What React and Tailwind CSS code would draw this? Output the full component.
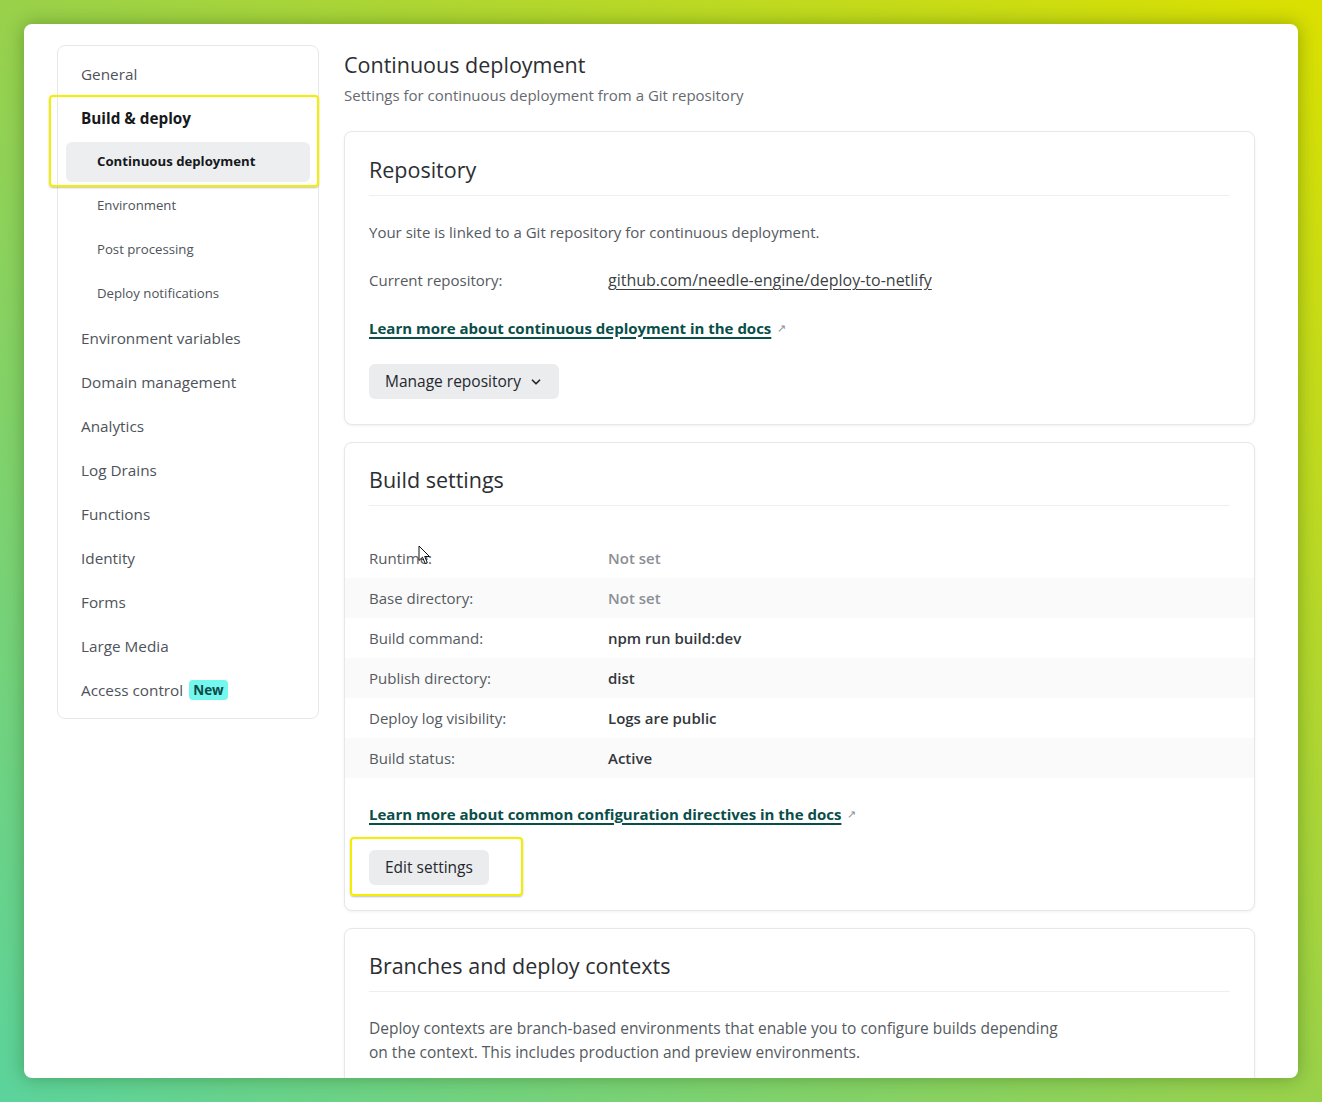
import React from "react";
import { ChevronDown } from "lucide-react";

const font = { fontFamily: '"Open Sans", "Noto Sans", sans-serif' };

function SideItem({ children, sub, active, bold }) {
  if (sub) {
    return (
      <div className="h-[44px] px-[8px] py-[2px]">
        <div
          className={
            "h-full rounded-md flex items-center pl-[31px] text-[13.2px] " +
            (active ? "bg-[#eceef0] font-bold text-[#16191c]" : "text-[#4e535a]")
          }
        >
          {children}
        </div>
      </div>
    );
  }
  return (
    <div
      className={
        "h-[44px] flex items-center pl-[23px] text-[15.3px] " +
        (bold ? "font-bold text-[#16191c]" : "text-[#4e535a]")
      }
    >
      {children}
    </div>
  );
}

function Card({ title, children, className = "", pt = "pt-[23px]" }) {
  return (
    <div
      className={
        "rounded-lg border border-[#e6e7e9] bg-white shadow-[0_1px_3px_rgba(0,0,0,0.06)] " + className
      }
    >
      <div className={"px-[24px] " + pt}>
        <div className="pb-[10px] border-b border-[#eeeff1] text-[21.5px] leading-[30px] text-[#2b2e33]">
          {title}
        </div>
      </div>
      {children}
    </div>
  );
}

function DocLink({ children }) {
  return (
    <div className="h-[24px] flex items-center text-[15px]">
      <span className="font-bold text-[#0a4e49] underline underline-offset-[3px] decoration-[1.5px]">
        {children}
      </span>
      <span className="ml-[6px] text-[11px] text-[#8a8f96]">↗</span>
    </div>
  );
}

function Row({ label, value, gray, muted }) {
  return (
    <div className={"h-[40px] flex items-center px-[24px] text-[15px] " + (gray ? "bg-[#fafafa]" : "")}>
      <div className="w-[239px] text-[#555a61]">{label}</div>
      <div className={"font-semibold " + (muted ? "text-[#8b8f95]" : "text-[#33373c]")}>{value}</div>
    </div>
  );
}

export default function App() {
  return (
    <div
      className="w-[1322px] h-[1102px] pt-[24px] pl-[24px] bg-[linear-gradient(40deg,#5bd39c_0%,#99d14a_50%,#dbe000_100%)]"
      style={font}
    >
      <div className="relative w-[1274px] h-[1054px] rounded-lg bg-white overflow-hidden shadow-[0_0_18px_rgba(20,60,0,0.35)] flex pl-[33px] pt-[21px]">
        {/* Sidebar */}
        <div className="relative self-start w-[262px] rounded-lg border border-[#e6e7e9] pt-[6px] pb-[6px]">
          <SideItem>General</SideItem>
          <SideItem bold>Build &amp; deploy</SideItem>
          <SideItem sub active>Continuous deployment</SideItem>
          <SideItem sub>Environment</SideItem>
          <SideItem sub>Post processing</SideItem>
          <SideItem sub>Deploy notifications</SideItem>
          <SideItem>Environment variables</SideItem>
          <SideItem>Domain management</SideItem>
          <SideItem>Analytics</SideItem>
          <SideItem>Log Drains</SideItem>
          <SideItem>Functions</SideItem>
          <SideItem>Identity</SideItem>
          <SideItem>Forms</SideItem>
          <SideItem>Large Media</SideItem>
          <div className="h-[44px] flex items-center pl-[23px] text-[15.3px] text-[#4e535a]">
            Access control
            <span className="ml-[6px] rounded-[4px] bg-[#74f7ef] px-[4px] text-[13.5px] leading-[20px] font-bold text-[#0b4b47]">
              New
            </span>
          </div>
          <div className="absolute left-[-9px] top-[49px] w-[270px] h-[92px] rounded-[4px] border-2 border-[#f4ee00] shadow-[0_1px_2px_rgba(0,0,0,0.25)]" />
        </div>

        {/* Main */}
        <div className="ml-[25px] w-[911px] flex flex-col">
          <div className="mt-[5px] text-[21.5px] leading-[30px] text-[#2b2e33]">Continuous deployment</div>
          <div className="text-[15px] leading-[30px] text-[#666a70]">
            Settings for continuous deployment from a Git repository
          </div>

          <Card title="Repository" className="mt-[21px]">
            <div className="px-[24px] pt-[24px] pb-[25px] flex flex-col gap-[24px] text-[15px] text-[#555a61]">
              <div className="h-[24px] flex items-center">
                Your site is linked to a Git repository for continuous deployment.
              </div>
              <div className="h-[24px] flex items-center">
                <div className="w-[239px]">Current repository:</div>
                <span className="text-[16px] text-[#3b3f44] underline underline-offset-[3px]">
                  github.com/needle-engine/deploy-to-netlify
                </span>
              </div>
              <DocLink>Learn more about continuous deployment in the docs</DocLink>
              <div>
                <button className="h-[35px] rounded-md bg-[#ebecee] px-[16px] flex items-center text-[15.5px] text-[#24282d]">
                  Manage repository
                  <ChevronDown size={14} strokeWidth={3} className="ml-[8px]" />
                </button>
              </div>
            </div>
          </Card>

          <Card title="Build settings" className="mt-[17px]" pt="pt-[22px]">
            <div className="pt-[32px] relative">
              <Row label="Runtime:" value="Not set" muted />
              <Row label="Base directory:" value="Not set" muted gray />
              <Row label="Build command:" value="npm run build:dev" />
              <Row label="Publish directory:" value="dist" gray />
              <Row label="Deploy log visibility:" value="Logs are public" />
              <Row label="Build status:" value="Active" gray />
              <svg
                className="absolute left-[73px] top-[39px]"
                width="13"
                height="20"
                viewBox="0 0 13 20"
              >
                <path
                  d="M1 1 L1 15.5 L4.5 12.2 L7.2 18.5 L9.3 17.6 L6.7 11.5 L11.5 11.5 Z"
                  fill="#fff"
                  stroke="#111"
                  strokeWidth="1"
                  strokeLinejoin="round"
                />
              </svg>
            </div>
            <div className="px-[24px] pt-[24px] pb-[25px] flex flex-col gap-[24px]">
              <DocLink>Learn more about common configuration directives in the docs</DocLink>
              <div className="relative">
                <button className="h-[35px] rounded-md bg-[#ebecee] px-[16px] flex items-center text-[15.5px] text-[#24282d]">
                  Edit settings
                </button>
                <div className="absolute left-[-19px] top-[-13px] w-[173px] h-[59px] rounded-[4px] border-2 border-[#f4ee00] shadow-[0_1px_2px_rgba(0,0,0,0.25)]" />
              </div>
            </div>
          </Card>

          <Card title="Branches and deploy contexts" className="mt-[17px]" pt="pt-[22px]">
            <div className="px-[24px] pt-[24px] pb-[24px] text-[15.5px] leading-[24px] text-[#555a61] max-w-[748px]">
              Deploy contexts are branch-based environments that enable you to configure builds depending on the
              context. This includes production and preview environments.
            </div>
          </Card>
        </div>
      </div>
    </div>
  );
}
